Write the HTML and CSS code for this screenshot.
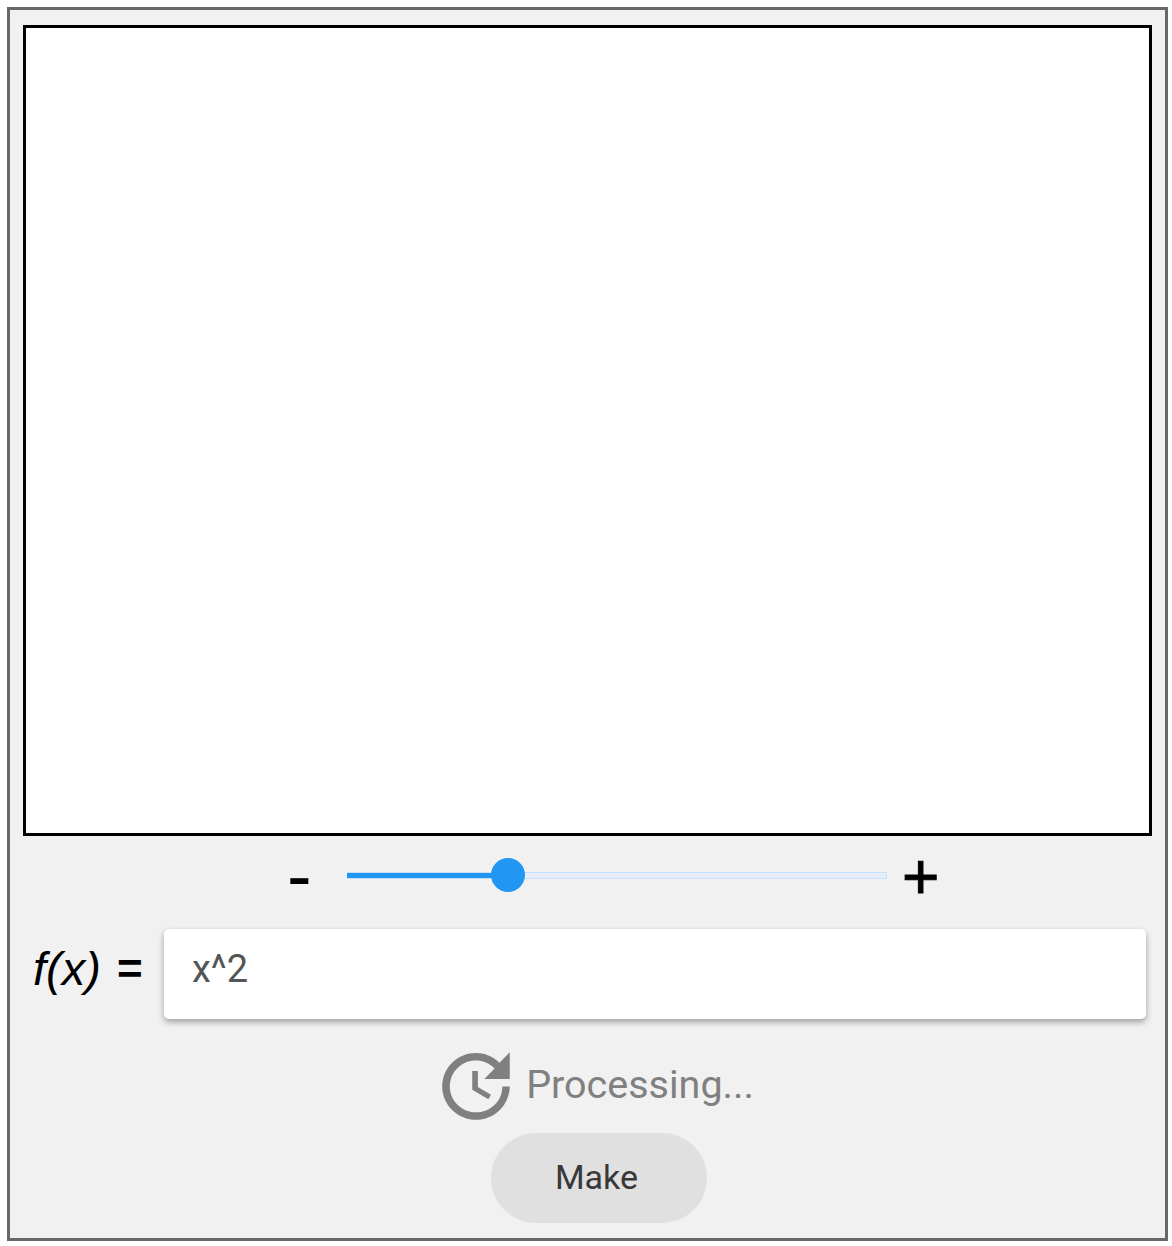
FILE: index.html
```html
<!DOCTYPE html>
<html lang="en">
<head>
  <meta charset="UTF-8">
  <title>Graph</title>
  <link rel="stylesheet" href="styles.css">
</head>
<body>

<div class="panel">
  <div class="canvas"></div>

  <div class="zoom-row">
    <span class="zoom-btn zoom-minus">-</span>
    <div class="slider">
      <div class="slider-fill"></div>
      <div class="slider-thumb"></div>
    </div>
    <span class="zoom-btn zoom-plus">+</span>
  </div>

  <div class="func-row">
    <div class="func-label"><i>f(x)</i> <span class="func-eq">=</span></div>
    <div class="func-input">x^2</div>
  </div>

  <div class="status">
    <svg class="status-icon" viewBox="0 0 24 24">
      <path d="M21 10.12h-6.78l2.74-2.82c-2.73-2.7-7.15-2.8-9.88-.1-2.73 2.71-2.73 7.08 0 9.79s7.15 2.71 9.88 0C18.32 15.65 19 14.08 19 12.1h2c0 1.98-.88 4.55-2.64 6.29-3.51 3.48-9.21 3.48-12.72 0-3.5-3.47-3.53-9.11-.02-12.58s9.14-3.47 12.65 0L21 3v7.12zM12.5 8v4.25l3.5 2.08-.72 1.21L11 13V8h1.5z"/>
    </svg>
    <span class="status-text">Processing...</span>
  </div>

  <div class="actions">
    <button class="make-btn">Make</button>
  </div>
</div>

</body>
</html>
```

FILE: styles.css
```css
html, body {
  background: #fff;
}
body {
  margin: 7px 0 0 7px;
  font-family: "Liberation Sans", Arial, sans-serif;
}
.panel {
  box-sizing: border-box;
  width: 1161px;
  height: 1234px;
  border: 3px solid #686868;
  background: #f1f1f1;
  padding: 15px 0 0 13px;
}
.canvas {
  box-sizing: border-box;
  width: 1129px;
  height: 811px;
  background: #fff;
  border: 3px solid #000;
}
.zoom-row {
  display: flex;
  align-items: center;
  height: 82px;
  padding-left: 264px;
}
.zoom-btn {
  line-height: 82px;
  color: #000;
}
.zoom-minus {
  width: 60px;
  font-size: 74px;
  margin-bottom: 2px;
}
.zoom-plus {
  margin-left: 15px;
  font-size: 64px;
  -webkit-text-stroke: 1px #000;
}
.slider {
  position: relative;
  box-sizing: border-box;
  width: 540px;
  height: 7px;
  margin-bottom: 4px;
  background: #e6edf9;
  border: 1px solid #c5e0fb;
  border-left: 0;
}
.slider-fill {
  height: 100%;
  width: 30%;
  background: #2196f3;
}
.slider-thumb {
  position: absolute;
  left: 144px;
  top: -15px;
  width: 34px;
  height: 34px;
  border-radius: 50%;
  background: #2196f3;
}
.func-row {
  display: flex;
  align-items: center;
  height: 90px;
  margin-top: 11px;
}
.func-label {
  width: 141px;
  padding-left: 10px;
  box-sizing: border-box;
  font-size: 47px;
  color: #000;
  margin-bottom: 12px;
}
.func-eq {
  font-size: 44px;
  font-weight: bold;
  margin-left: 3px;
  vertical-align: 1px;
}
.func-input {
  box-sizing: border-box;
  width: 982px;
  height: 90px;
  padding: 16px 28px 0;
  background: #fff;
  border-radius: 5px;
  box-shadow: 0 3px 6px rgba(0, 0, 0, 0.35);
  font-family: Roboto, sans-serif;
  font-size: 38px;
  line-height: 48px;
  color: #555;
}
.status {
  display: flex;
  align-items: center;
  justify-content: center;
  width: 1129px;
  height: 90px;
  margin-top: 22px;
  padding-left: 10px;
  box-sizing: border-box;
}
.status-icon {
  width: 90px;
  height: 90px;
  fill: #808080;
}
.status-text {
  font-family: Roboto, sans-serif;
  font-size: 39.5px;
  color: #808080;
  margin-left: 5px;
  margin-bottom: 4px;
}
.actions {
  display: flex;
  justify-content: center;
  width: 1129px;
  margin-top: 2px;
  padding-left: 22px;
  box-sizing: border-box;
}
.make-btn {
  width: 216px;
  height: 90px;
  padding: 0 10px 2px 6px;
  border: 0;
  border-radius: 45px;
  background: #e0e0e0;
  font-family: Roboto, sans-serif;
  font-size: 34px;
  color: #383838;
}
```
